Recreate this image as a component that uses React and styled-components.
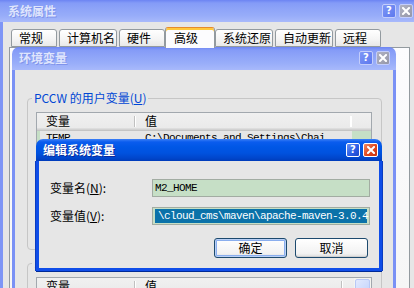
import React from 'react';
import styled, { createGlobalStyle } from 'styled-components';

const Global = createGlobalStyle`
  html, body { margin: 0; padding: 0; background: #fff; }
  body {
    font-family: "Noto Sans CJK SC", "Noto Sans", sans-serif;
    font-size: 12px;
    color: #000;
  }
  * { box-sizing: border-box; }
`;

const inactiveGrad = 'linear-gradient(to bottom, #6c84f3 0px, #849bf7 3px, #8ea4f8 9px, #98adf9 16px, #a8b9fb 100%)';
const activeGrad = 'linear-gradient(to bottom, #3d80f6 0px, #0a5cee 3px, #0057e6 8px, #0052df 14px, #0046cc 19px, #003cba 100%)';
const face = '#e6e6e6';
const paleGreen = '#c6dfc6';

const Desktop = styled.div`
  position: relative;
  width: 414px;
  height: 288px;
  overflow: hidden;
  background: ${face};
`;

/* ---------- window chrome ---------- */
const OuterWindow = styled.div`
  display: flex;
  flex-direction: column;
  width: 418px;
  height: 288px;
`;

const TitleBar = styled.div`
  display: flex;
  align-items: center;
  flex-shrink: 0;
  height: ${p => p.$h}px;
  padding: 0 ${p => p.$pr}px 1px ${p => p.$pl}px;
  gap: 3px;
  background: ${p => (p.$active ? activeGrad : inactiveGrad)};
  border-radius: ${p => (p.$round ? '7px 7px 0 0' : '0')};
`;

const TitleText = styled.span`
  flex: 1;
  font-weight: bold;
  font-size: 12px;
  line-height: 14px;
  color: ${p => (p.$active ? '#ffffff' : '#dfe5fd')};
  text-shadow: ${p => (p.$active ? '1px 1px 0 #0c2a9a' : '1px 1px 0 #8093ea')};
`;

const CapButton = styled.div`
  width: ${p => p.$w || 14}px;
  height: 14px;
  border-radius: 2px;
  display: flex;
  align-items: center;
  justify-content: center;
  border: 1px solid ${p => (p.$active ? '#ffffff' : '#c3cdfb')};
  background: ${p => {
    if (p.$kind === 'close') return p.$active ? 'linear-gradient(135deg, #f08a66, #e0461c 55%, #c83410)' : 'linear-gradient(135deg, #b0b2c2, #9597a8)';
    return p.$active ? 'linear-gradient(135deg, #6a92f6, #2c5ee6 55%, #1c46c8)' : 'linear-gradient(135deg, #7e96f6, #5c78ee)';
  }};
  color: #fff;
  font-family: "DejaVu Sans", sans-serif;
  font-weight: bold;
  font-size: 10px;
  line-height: 10px;
`;

const CloseGlyph = () => (
  <svg width="8" height="8" viewBox="0 0 8 8">
    <path d="M1 1 L7 7 M7 1 L1 7" stroke="#fff" strokeWidth="2" strokeLinecap="square" />
  </svg>
);

const Caption = ({ title, active, h, pl, pr, round, closeW }) => (
  <TitleBar $active={active} $h={h} $pl={pl} $pr={pr} $round={round}>
    <TitleText $active={active}>{title}</TitleText>
    <CapButton $active={active} $kind="help">?</CapButton>
    <CapButton $active={active} $kind="close" $w={closeW}><CloseGlyph /></CapButton>
  </TitleBar>
);

/* ---------- outer window body with tabs ---------- */
const OuterBody = styled.div`
  flex: 1;
  display: flex;
  flex-direction: column;
  background: ${face};
  border-left: 3px solid #7e95f6;
  padding: 7px 8px 0 6px;
`;

const TabStrip = styled.div`
  display: flex;
  align-items: flex-end;
  gap: 2px;
  padding-left: 2px;
  height: 18px;
  position: relative;
  z-index: 1;
`;

const Tab = styled.div`
  width: ${p => p.$w + (p.$sel ? 4 : 0)}px;
  height: ${p => (p.$sel ? 21 : 18)}px;
  margin: 0 ${p => (p.$sel ? -2 : 0)}px ${p => (p.$sel ? -1 : 0)}px;
  padding-left: ${p => (p.$sel ? 8 : 7)}px;
  display: flex;
  align-items: center;
  line-height: 14px;
  border: 1px solid #939a9f;
  border-bottom: ${p => (p.$sel ? 'none' : '1px solid #939a9f')};
  border-radius: 3px 3px 0 0;
  background: ${p => (p.$sel ? '#fcfcfe' : 'linear-gradient(to bottom, #ffffff, #f4f4f4 60%, #e8e8e8)')};
  box-shadow: ${p => (p.$sel ? 'inset 0 2px 0 #ffc83c' : 'none')};
  border-top-color: ${p => (p.$sel ? '#e68b2c' : '#939a9f')};
  position: relative;
  z-index: ${p => (p.$sel ? 2 : 1)};
`;

const TabPanel = styled.div`
  flex: 1;
  background: linear-gradient(to bottom, #fcfcfe, #f6f6f6);
  border: 1px solid #939a9f;
  border-bottom: none;
`;

/* ---------- environment variables window ---------- */
const EnvWindow = styled.div`
  position: absolute;
  left: 12px;
  top: 47px;
  width: 384px;
  height: 270px;
  display: flex;
  flex-direction: column;
`;

const EnvBody = styled.div`
  flex: 1;
  display: flex;
  flex-direction: column;
  gap: 6px;
  background: ${face};
  border-left: 3px solid #7a91f5;
  border-right: 3px solid #7a91f5;
  padding: 21px 11px 0 12px;
`;

const GroupBox = styled.fieldset`
  margin: 0;
  min-width: 0;
  border: 1px solid #c6c6c6;
  border-radius: 4px;
  padding: 7px 9px 8px 8px;
  display: flex;
  flex-direction: column;
  gap: 7px;
`;

const Legend = styled.legend`
  margin-left: -4px;
  padding: 0 2px;
  color: #0046d5;
  font-size: 12px;
  line-height: 14px;
`;

const Key = styled.span`
  text-decoration: underline;
`;

const ListView = styled.div`
  height: ${p => p.$h}px;
  border: 1px solid #a2a8ae;
  background: ${paleGreen};
  display: flex;
  flex-direction: column;
  overflow: hidden;
`;

const ListHeader = styled.div`
  display: flex;
  flex: ${p => (p.$grow ? 1 : '0 0 auto')};
  height: 18px;
  flex-shrink: 0;
  background: linear-gradient(to bottom, #f0f0f0, #e9e9e9);
  box-shadow: inset 0 -1px 0 #c4c4c4, inset 0 -2px 0 #d2d2d2, inset 0 -3px 0 #dddddd;
`;

const HeaderCell = styled.div`
  position: relative;
  width: ${p => (p.$w ? `${p.$w}px` : 'auto')};
  flex: ${p => (p.$w ? '0 0 auto' : '1')};
  padding-left: 9px;
  line-height: 16px;
  &::after {
    content: '';
    display: ${p => (p.$sep ? 'block' : 'none')};
    position: absolute;
    right: 0;
    top: 3px;
    bottom: 4px;
    width: 2px;
    background: ${p => (p.$sep === 'light' ? '#ffffff' : 'linear-gradient(to right, #c0c0c0 50%, #ffffff 50%)')};
  }
`;

const ListRow = styled.div`
  display: flex;
  width: 312px;
  margin-left: 3px;
  height: 14px;
  line-height: 14px;
  background: ${p => (p.$sel ? face : 'transparent')};
`;

const RowCell = styled.div`
  width: ${p => p.$w}px;
  padding-left: ${p => p.$pl}px;
  white-space: nowrap;
  overflow: hidden;
  font-family: "Liberation Mono", monospace;
  font-size: 11px;
  letter-spacing: -0.6px;
`;

const ScrollArea = styled.div`
  flex: 1;
  display: flex;
`;

const ScrollTrack = styled.div`
  width: 17px;
  flex-shrink: 0;
  background: #f4f4f0;
  display: flex;
  flex-direction: column;
  align-items: center;
`;

const ScrollArrow = styled.div`
  width: 15px;
  height: 16px;
  margin-top: 1px;
  border: 1px solid #b8c8f6;
  border-radius: 2px;
  background: linear-gradient(135deg, #e2e9fe, #c2d2fc);
`;

const GroupButtons = styled.div`
  display: flex;
  justify-content: flex-end;
  gap: 6px;
`;

/* ---------- edit dialog ---------- */
const EditDialog = styled.div`
  position: absolute;
  left: 36px;
  top: 139px;
  width: 346px;
  height: 132px;
  display: flex;
  flex-direction: column;
`;

const DialogBody = styled.div`
  flex: 1;
  display: flex;
  flex-direction: column;
  background: ${face};
  border: 3px solid #0f4de8;
  border-top: none;
  box-shadow: 0 1px 0 #002a96, -1px 0 0 #0a3cc0, 1px 0 0 #0a3cc0;
  padding: 18px 9px 0 11px;
`;

const FieldRow = styled.div`
  display: flex;
  align-items: center;
  height: 18px;
  margin-bottom: 10px;
`;

const FieldLabel = styled.div`
  width: 102px;
  line-height: 14px;
`;

const TextInput = styled.div`
  width: 218px;
  height: 18px;
  border: 1px solid #a2aca2;
  background: ${paleGreen};
  padding: 1px 2px;
  display: flex;
  align-items: center;
  overflow: hidden;
  white-space: nowrap;
  font-family: "Liberation Mono", monospace;
  font-size: 11px;
  letter-spacing: -0.6px;
`;

const Selected = styled.span`
  display: block;
  height: 14px;
  line-height: 14px;
  padding-left: 3px;
  width: 100%;
  background: #0b72a9;
  color: #fff;
`;

const ButtonRow = styled.div`
  display: flex;
  justify-content: flex-end;
  gap: 8px;
  margin-top: 3px;
  padding-right: 2px;
`;

const PushButton = styled.div`
  width: 73px;
  height: 20px;
  border: 1px solid #1d4a6e;
  border-radius: 3px;
  display: flex;
  align-items: center;
  justify-content: center;
  line-height: 14px;
  background: linear-gradient(to bottom, #ffffff, #f2f2f2 80%, #dcdcdc);
  box-shadow: ${p => (p.$def ? 'inset 0 0 0 1px #b9d0f6, inset 0 0 0 2px #8aaeee' : 'inset 0 -1px 0 #d0d0d0')};
`;

export default function App() {
  return (
    <>
      <Global />
      <Desktop>
        <OuterWindow>
          <Caption title="系统属性" h={22} pl={8} pr={5} />
          <OuterBody>
            <TabStrip>
              <Tab $w={46}>常规</Tab>
              <Tab $w={58}>计算机名</Tab>
              <Tab $w={46}>硬件</Tab>
              <Tab $w={46} $sel>高级</Tab>
              <Tab $w={58}>系统还原</Tab>
              <Tab $w={58}>自动更新</Tab>
              <Tab $w={46}>远程</Tab>
            </TabStrip>
            <TabPanel />
          </OuterBody>
        </OuterWindow>

        <EnvWindow>
          <Caption title="环境变量" h={23} pl={7} pr={6} round />
          <EnvBody>
            <GroupBox>
              <Legend>PCCW 的用户变量(<Key>U</Key>)</Legend>
              <ListView $h={102}>
                <ListHeader>
                  <HeaderCell $w={99} $sep="dark">变量</HeaderCell>
                  <HeaderCell $w={216} $sep="light">值</HeaderCell>
                  <HeaderCell />
                </ListHeader>
                <ListRow $sel>
                  <RowCell $w={96} $pl={6}>TEMP</RowCell>
                  <RowCell $w={216} $pl={9}>C:\Documents and Settings\Chai</RowCell>
                </ListRow>
                <ListRow>
                  <RowCell $w={96} $pl={6}>TMP</RowCell>
                  <RowCell $w={216} $pl={9}>C:\Documents and Settings\Chai</RowCell>
                </ListRow>
              </ListView>
              <GroupButtons>
                <PushButton>新建(N)...</PushButton>
                <PushButton>编辑(E)...</PushButton>
                <PushButton>删除(D)</PushButton>
              </GroupButtons>
            </GroupBox>
            <GroupBox>
              <Legend>系统变量(<Key>S</Key>)</Legend>
              <ListView $h={100}>
                <ScrollArea>
                  <ListHeader $grow>
                    <HeaderCell $w={99} $sep="dark">变量</HeaderCell>
                    <HeaderCell $w={207} $sep="dark">值</HeaderCell>
                    <HeaderCell />
                  </ListHeader>
                  <ScrollTrack>
                    <ScrollArrow />
                  </ScrollTrack>
                </ScrollArea>
              </ListView>
            </GroupBox>
          </EnvBody>
        </EnvWindow>

        <EditDialog>
          <Caption title="编辑系统变量" h={22} pl={7} pr={4} round active closeW={15} />
          <DialogBody>
            <FieldRow>
              <FieldLabel>变量名(<Key>N</Key>):</FieldLabel>
              <TextInput>M2_HOME</TextInput>
            </FieldRow>
            <FieldRow>
              <FieldLabel>变量值(<Key>V</Key>):</FieldLabel>
              <TextInput>
                <Selected>\cloud_cms\maven\apache-maven-3.0.4</Selected>
              </TextInput>
            </FieldRow>
            <ButtonRow>
              <PushButton $def>确定</PushButton>
              <PushButton>取消</PushButton>
            </ButtonRow>
          </DialogBody>
        </EditDialog>
      </Desktop>
    </>
  );
}
